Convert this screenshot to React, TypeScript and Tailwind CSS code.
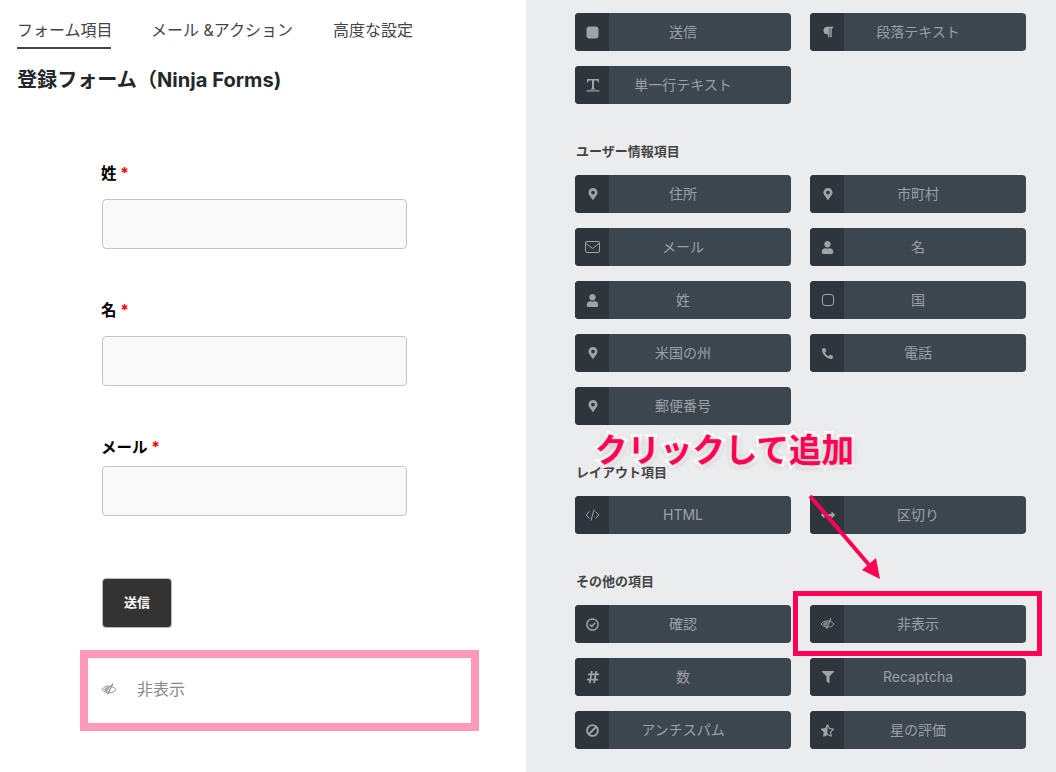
import React from "react";
import { FaMapMarkerAlt, FaUser, FaPhoneAlt, FaArrowsAltH, FaHashtag, FaFilter, FaStarHalfAlt, FaParagraph } from "react-icons/fa";

const font = { fontFamily: '"Inter","Noto Sans CJK JP",sans-serif' };

function TextIcon() {
  return (
    <svg width="14" height="14" viewBox="0 0 14 14" fill="currentColor">
      <path d="M1 1h12v3.6h-1L11.5 2.5H8v8h1.4v1H4.6v-1H6v-8H2.5L2 4.6H1z" />
      <rect x="0.5" y="12.3" width="13" height="1.2" />
    </svg>
  );
}
function EyeIcon({ size = 16 }: { size?: number }) {
  return (
    <svg width={size} height={(size * 12) / 16} viewBox="0 0 16 12" fill="currentColor">
      <path d="M1 6.5C4 2.2 11 1.6 15 6.5 12 10.8 5 11 1 6.5Z" fill="none" stroke="currentColor" strokeWidth="1" />
      <path d="M3 6.5C4.6 4.4 6.8 3.4 9.2 3.4L6 9C4.7 8.6 3.8 7.6 3 6.5Z" fillOpacity="0.75" />
      <line x1="11.8" y1="0.5" x2="6.6" y2="11.5" stroke="currentColor" strokeWidth="1.2" />
    </svg>
  );
}
function SquareSolid() {
  return (
    <svg width="13" height="13" viewBox="0 0 13 13" fill="currentColor">
      <rect x="0.5" y="0.5" width="12" height="12" rx="3" />
    </svg>
  );
}
function SquareOutline() {
  return (
    <svg width="12" height="12" viewBox="0 0 12 12" fill="none" stroke="currentColor">
      <rect x="0.5" y="0.5" width="11" height="11" rx="2.5" />
    </svg>
  );
}
function Envelope() {
  return (
    <svg width="15" height="12" viewBox="0 0 15 12" fill="none" stroke="currentColor">
      <rect x="0.5" y="0.5" width="14" height="11" rx="1.5" />
      <path d="M1 2.5 7.5 7.5 14 2.5" />
    </svg>
  );
}
function Code() {
  return (
    <svg width="15" height="12" viewBox="0 0 15 12" fill="none" stroke="currentColor">
      <path d="M4.5 2.5 1 6l3.5 3.5M10.5 2.5 14 6l-3.5 3.5M9 0.5 6 11.5" />
    </svg>
  );
}
function CheckCircle() {
  return (
    <svg width="13" height="13" viewBox="0 0 13 13" fill="none" stroke="currentColor" strokeWidth="1.5">
      <circle cx="6.5" cy="6.5" r="5.6" />
      <path d="M3.8 6.6 5.8 8.5 9.3 4.8" />
    </svg>
  );
}
function Ban() {
  return (
    <svg width="13" height="13" viewBox="0 0 13 13" fill="none" stroke="currentColor" strokeWidth="1.9">
      <circle cx="6.5" cy="6.5" r="5.4" />
      <path d="M3 10 10 3" />
    </svg>
  );
}

type Item = [string, React.ReactNode];

function FieldButton({ label, icon }: { label: string; icon: React.ReactNode }) {
  return (
    <div className="flex h-[38px] overflow-hidden rounded-[4px] bg-[#3c464f] text-[14px] text-[#9ca0a4]">
      <div className="flex w-[34px] shrink-0 items-center justify-center bg-[#2f353c] pl-px text-[#a1a4a7]">{icon}</div>
      <div className="flex flex-1 items-center justify-center pr-[34px] pb-[2px]">{label}</div>
    </div>
  );
}

function Section({ title, items }: { title?: string; items: Item[] }) {
  return (
    <section>
      {title && <h3 className="mt-[37px] mb-[14px] ml-px h-5 text-[13px] leading-5 font-bold text-[#444]">{title}</h3>}
      <div className="grid grid-cols-[216px_216px] gap-x-[19px] gap-y-[15px]">
        {items.map(([label, icon]) => (
          <FieldButton key={label} label={label} icon={icon} />
        ))}
      </div>
    </section>
  );
}

function Field({ label, className, gap }: { label: string; className: string; gap: string }) {
  return (
    <div className={className}>
      <label className={`-ml-px block h-5 pt-px text-[15.5px] leading-5 font-bold text-black ${gap}`}>
        {label} <span className="text-[#f00]">*</span>
      </label>
      <div className="h-[50px] w-[305px] rounded-[4px] border border-[#c4c4c4] bg-[#f9f9f9]" />
    </div>
  );
}

export default function App() {
  const pin = <FaMapMarkerAlt size={12} />;
  const user = <FaUser size={13} />;
  return (
    <div className="relative flex h-[772px] w-[1056px] overflow-hidden bg-white" style={font}>
      <main className="w-[526px] shrink-0 bg-white">
        <nav className="flex gap-[40px] pt-[18px] pl-[17px] text-[16px] leading-[25px] text-[#444]">
          <span className="h-[31px] w-[94px] border-b-2 border-[#444] whitespace-nowrap">フォーム項目</span>
          <span>メール &amp;アクション</span>
          <span>高度な設定</span>
        </nav>
        <h1 className="mt-[17px] ml-[17px] h-7 text-[20.1px] leading-7 font-bold text-[#23282d]">登録フォーム（Ninja Forms)</h1>
        <div className="pl-[102px]">
          <Field label="姓" className="mt-[69px]" gap="mb-4" />
          <Field label="名" className="mt-[51px]" gap="mb-4" />
          <Field label="メール" className="mt-[51px]" gap="mb-[9px]" />
          <button className="mt-[62px] h-[50px] w-[70px] rounded-[4px] border border-[#bbb] bg-[#333] text-[13px] font-bold text-white">送信</button>
        </div>
        <div className="mt-[22px] ml-[80px] flex h-[81px] w-[399px] items-center gap-[20px] border-[8px] border-[#ff99b8] pb-[3px] pl-[13px] text-[16px] text-[#888]">
          <EyeIcon />
          <span>非表示</span>
        </div>
      </main>
      <aside className="flex-1 bg-[#ebecee] pt-[13px] pl-[49px]">
        <Section items={[["送信", <SquareSolid />], ["段落テキスト", <FaParagraph size={12} />], ["単一行テキスト", <TextIcon />]]} />
        <Section title="ユーザー情報項目" items={[["住所", pin], ["市町村", pin], ["メール", <Envelope />], ["名", user], ["姓", user], ["国", <SquareOutline />], ["米国の州", pin], ["電話", <FaPhoneAlt size={11} />], ["郵便番号", pin]]} />
        <Section title="レイアウト項目" items={[["HTML", <Code />], ["区切り", <FaArrowsAltH size={14} />]]} />
        <Section title="その他の項目" items={[["確認", <CheckCircle />], ["非表示", <EyeIcon size={15} />], ["数", <FaHashtag size={14} />], ["Recaptcha", <FaFilter size={12} />], ["アンチスパム", <Ban />], ["星の評価", <FaStarHalfAlt size={13} />]]} />
      </aside>
      <div className="absolute top-[591px] left-[793px] h-[65px] w-[249px] border-[5px] border-[#ff0055]" />
      <svg className="absolute top-[490px] left-[800px]" width="90" height="95" viewBox="0 0 90 95" fill="#ff0055">
        <line x1="10" y1="6" x2="70" y2="76" stroke="#ff0055" strokeWidth="4" />
        <polygon points="80,89 62,80 76,68" />
      </svg>
      <div className="absolute top-[430px] left-[595px] text-[32.5px] leading-[42px] font-bold whitespace-nowrap text-[#ff0055] [paint-order:stroke_fill] [-webkit-text-stroke:6px_white] [text-shadow:0_1px_6px_rgba(0,0,0,0.35)]">クリックして追加</div>
    </div>
  );
}
